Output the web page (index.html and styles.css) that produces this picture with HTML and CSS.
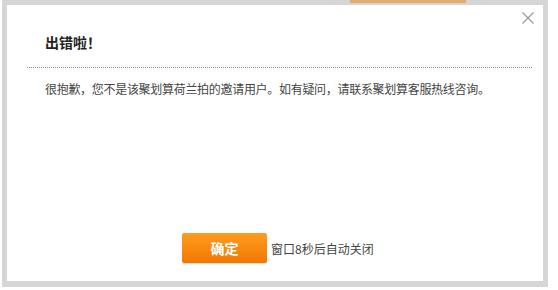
FILE: index.html
```html
<!DOCTYPE html>
<html lang="zh-CN">
<head>
  <meta charset="UTF-8" />
  <title>出错啦</title>
  <link rel="stylesheet" href="styles.css">
</head>
<body>
  <div class="page-strip"></div>

  <div class="dialog">
    <a class="close-btn" href="#" title="关闭">
      <svg width="12" height="12" viewBox="0 0 12 12">
        <path d="M0.5 0.5 L11.5 11.5 M11.5 0.5 L0.5 11.5" stroke="#9a9a9a" stroke-width="1.2" fill="none"/>
      </svg>
    </a>

    <h2 class="dialog-title">出错啦！</h2>

    <div class="dialog-body">
      很抱歉，您不是该聚划算荷兰拍的邀请用户。如有疑问，请联系聚划算客服热线咨询。
    </div>

    <div class="dialog-foot">
      <button class="ok-btn">确定</button>
      <span class="auto-close">窗口<span id="sec">8</span>秒后自动关闭</span>
    </div>
  </div>
</body>
</html>
```

FILE: styles.css
```css
body {
  margin: 0;
  padding: 0;
  background: #fff;
  font-family: "Noto Sans CJK SC", "DejaVu Sans", sans-serif;
  color: #333;
  position: relative;
  height: 290px;
  overflow: hidden;
}

/* bit of the page behind, showing above the frame */
.page-strip {
  position: absolute;
  top: 0;
  left: 350px;
  width: 116px;
  height: 3px;
  background: #e39b4a;
  z-index: 2;
  opacity: 0.7;
}

.dialog {
  position: relative;
  margin-left: 2px;
  width: 536px;
  height: 276px;
  border: 5px solid #d6d6d6;
  border-bottom-width: 6px;
  background: #fff;
  display: flex;
  flex-direction: column;
}

.close-btn {
  position: absolute;
  top: 7px;
  right: 9px;
  width: 12px;
  height: 12px;
  display: block;
}

.close-btn svg {
  display: block;
}

.dialog-title {
  margin: 0 11px 0 20px;
  padding: 29px 0 17px 18px;
  font-size: 14px;
  font-weight: bold;
  line-height: 16px;
  color: #222;
  border-bottom: 1px dotted #888;
}

.dialog-body {
  padding: 13px 0 0 38px;
  font-size: 12px;
  line-height: 16px;
  letter-spacing: -0.3px;
  color: #444;
  flex: 1;
}

.dialog-foot {
  display: flex;
  align-items: center;
  padding: 0 0 18px 175px;
}

.ok-btn {
  width: 85px;
  height: 30px;
  border: none;
  border-radius: 2px;
  background: linear-gradient(#ff9c20, #f27800);
  color: #fff;
  font-family: inherit;
  font-size: 14px;
  font-weight: bold;
  cursor: pointer;
  box-shadow: 0 1px 1px rgba(0,0,0,0.15);
}

.auto-close {
  margin-left: 4px;
  font-size: 12px;
  color: #444;
}
```
